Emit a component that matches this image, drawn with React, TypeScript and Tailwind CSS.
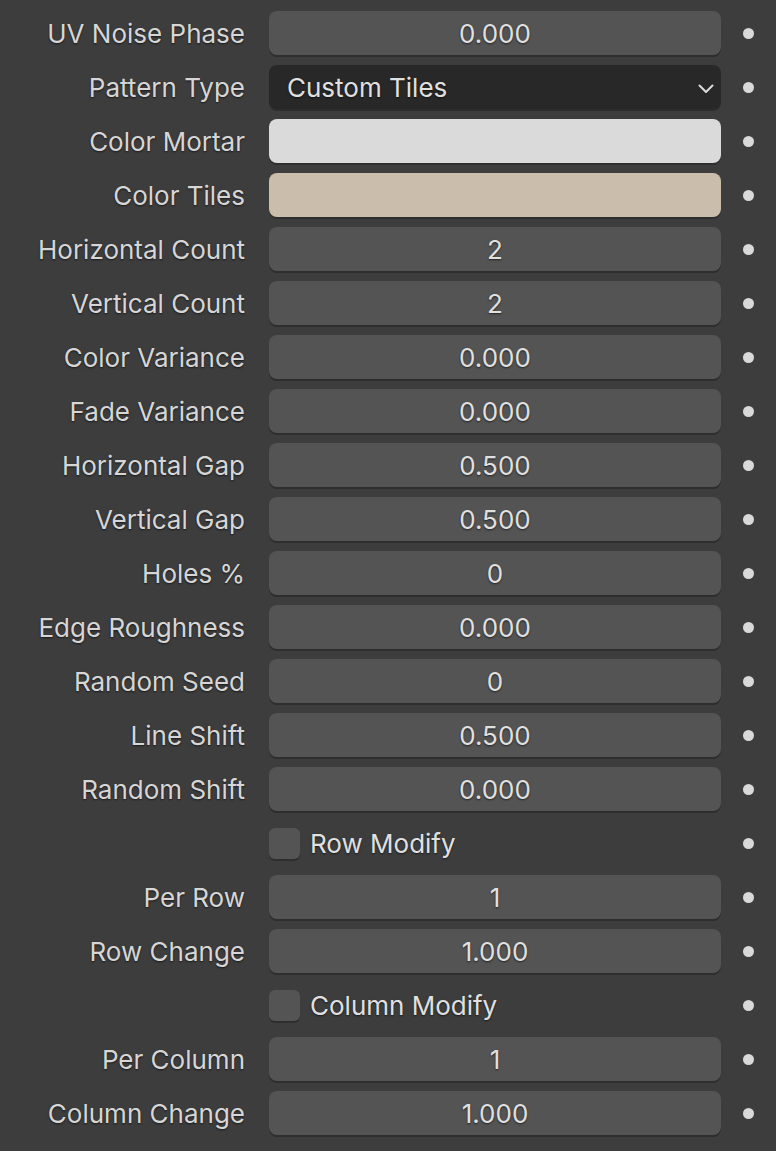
import React from "react";

type Row =
  | { kind: "num"; label: string; value: string }
  | { kind: "enum"; label: string; value: string }
  | { kind: "color"; label: string; color: string }
  | { kind: "check"; label: string };

const rows: Row[] = [
  { kind: "num", label: "UV Noise Phase", value: "0.000" },
  { kind: "enum", label: "Pattern Type", value: "Custom Tiles" },
  { kind: "color", label: "Color Mortar", color: "mortar" },
  { kind: "color", label: "Color Tiles", color: "tiles" },
  { kind: "num", label: "Horizontal Count", value: "2" },
  { kind: "num", label: "Vertical Count", value: "2" },
  { kind: "num", label: "Color Variance", value: "0.000" },
  { kind: "num", label: "Fade Variance", value: "0.000" },
  { kind: "num", label: "Horizontal Gap", value: "0.500" },
  { kind: "num", label: "Vertical Gap", value: "0.500" },
  { kind: "num", label: "Holes %", value: "0" },
  { kind: "num", label: "Edge Roughness", value: "0.000" },
  { kind: "num", label: "Random Seed", value: "0" },
  { kind: "num", label: "Line Shift", value: "0.500" },
  { kind: "num", label: "Random Shift", value: "0.000" },
  { kind: "check", label: "Row Modify" },
  { kind: "num", label: "Per Row", value: "1" },
  { kind: "num", label: "Row Change", value: "1.000" },
  { kind: "check", label: "Column Modify" },
  { kind: "num", label: "Per Column", value: "1" },
  { kind: "num", label: "Column Change", value: "1.000" },
];

const shadowText = "[text-shadow:0_1px_2px_rgba(0,0,0,0.6)]";

function Field({ row }: { row: Row }) {
  if (row.kind === "num") {
    return (
      <div className="w-[452px] h-[44px] rounded-[8px] bg-[#545454] shadow-[0_2px_0_#2e2e2e] flex items-center justify-center text-[#e0e0e0]">
        <span className={"pt-[1px] " + shadowText}>{row.value}</span>
      </div>
    );
  }
  if (row.kind === "enum") {
    return (
      <div className="w-[452px] h-[44px] rounded-[8px] bg-[#282828] shadow-[0_2px_0_#2e2e2e] flex items-center justify-between pl-[18px] pr-[7px] text-[#e0e0e0]">
        <span className={"pt-[1px] " + shadowText}>{row.value}</span>
        <svg width="16" height="16" viewBox="0 0 16 16" className="mt-[4px]">
          <path d="M1.5 4.5 L8 11 L14.5 4.5" fill="none" stroke="#dcdcdc" strokeWidth="2" strokeLinecap="round" strokeLinejoin="round" />
        </svg>
      </div>
    );
  }
  if (row.kind === "color") {
    return (
      <div
        className={
          "w-[452px] h-[44px] rounded-[8px] shadow-[0_2px_0_#2e2e2e] " +
          (row.color === "mortar" ? "bg-[#dadada]" : "bg-[#cbbdab]")
        }
      />
    );
  }
  return (
    <div className="w-[452px] h-[44px] flex items-center">
      <div className="w-[31px] h-[31px] rounded-[6px] bg-[#545454] shadow-[0_2px_0_#2e2e2e]" />
      <span className={"ml-[10px] pt-[1px] text-[#e0e0e0] " + shadowText}>{row.label}</span>
    </div>
  );
}

export default function App() {
  return (
    <div
      className="w-[776px] h-[1151px] bg-[#3d3d3d] pt-[6px] text-[26px] overflow-hidden"
      style={{ fontFamily: "Inter, 'Noto Sans', sans-serif" }}
    >
      {rows.map((r, i) => (
        <div key={i} className="flex items-center h-[54px]">
          <div className={"w-[245px] pt-[1px] text-right text-[#d6d6d6] leading-none " + shadowText}>
            {r.kind === "check" ? "" : r.label}
          </div>
          <div className="ml-[24px]">
            <Field row={r} />
          </div>
          <div className="ml-[22px] w-[11px] h-[11px] rounded-full bg-[#d9d9d9]" />
        </div>
      ))}
    </div>
  );
}
